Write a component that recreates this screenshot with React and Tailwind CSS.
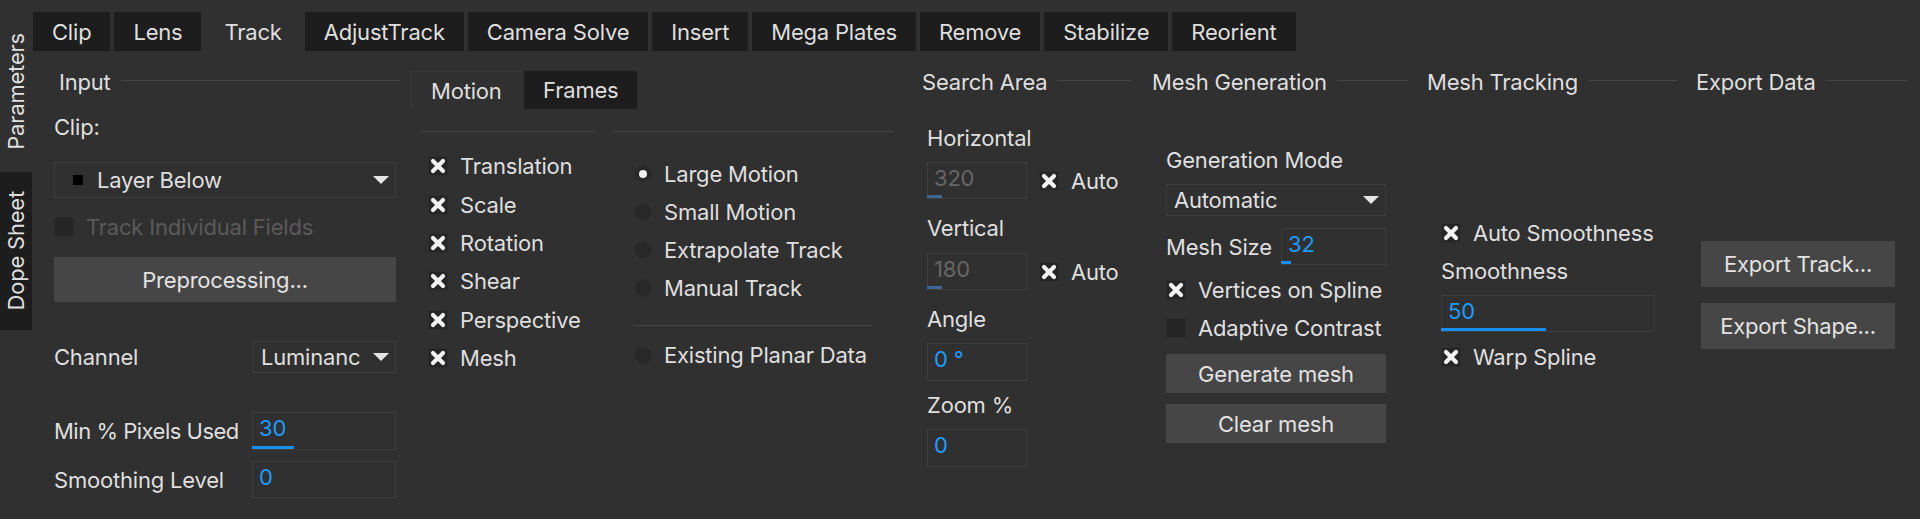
import React from "react";

const tabs = ["Clip", "Lens", "Track", "AdjustTrack", "Camera Solve", "Insert", "Mega Plates", "Remove", "Stabilize", "Reorient"];
const motions = ["Translation", "Scale", "Rotation", "Shear", "Perspective", "Mesh"];
const modes = ["Large Motion", "Small Motion", "Extrapolate Track", "Manual Track"];

function XMark() {
  return (
    <svg viewBox="0 0 18 18" className="w-[18px] h-[18px]">
      <path d="M4 4 L14 14 M14 4 L4 14" stroke="#f2f2f2" strokeWidth="4.2" strokeLinecap="round" />
    </svg>
  );
}

function Arrow() {
  return (
    <svg viewBox="0 0 16 8" className="w-[16px] h-[8px] shrink-0">
      <polygon points="0,0 16,0 8,8" fill="#e4e4e4" />
    </svg>
  );
}

function Heading({ title, pad = "" }) {
  return (
    <div className="flex items-center h-[30px] gap-[10px]">
      <span className={`whitespace-nowrap ${pad}`}>{title}</span>
      <div className="flex-1 h-px bg-[#464646] mb-[3px]" />
    </div>
  );
}

function Check({ label, checked, disabled, className = "" }) {
  return (
    <div className={`flex items-center gap-3 ${className}`}>
      <div className="w-[20px] h-[20px] shrink-0 bg-[#262626] border border-[#2c2c2c] flex items-center justify-center">
        {checked && <XMark />}
      </div>
      <span className={disabled ? "text-[#5a5a5a] whitespace-nowrap" : "whitespace-nowrap"}>{label}</span>
    </div>
  );
}

function Radio({ label, on }) {
  return (
    <div className="flex items-center gap-3 h-[38px] pl-[22px]">
      <div className="w-[18px] h-[18px] rounded-full bg-[#282828] border border-[#2e2e2e] flex items-center justify-center">
        {on && <div className="w-[8px] h-[8px] rounded-full bg-[#f0f0f0]" />}
      </div>
      <span>{label}</span>
    </div>
  );
}

function Field({ value, dim, bar, className = "" }) {
  return (
    <div className={`relative border border-[#3e3e3e] pl-[6px] pt-[2px] leading-[26px] ${className}`}>
      <span className={dim ? "text-[#666666]" : "text-[#1c9cff]"}>{value}</span>
      {bar && <div className={`absolute -left-px bottom-0 h-[3px] ${bar}`} />}
    </div>
  );
}

function Button({ children, className = "" }) {
  return <div className={`bg-[#464646] flex items-center justify-center text-[#e2e2e2] ${className}`}>{children}</div>;
}

export default function App() {
  return (
    <div className="w-[1920px] h-[519px] bg-[#303030] text-[22px] leading-[30px] tracking-[-0.2px] text-[#dfdfdf] flex overflow-hidden font-[Inter,sans-serif]">
      {/* side tabs */}
      <div className="w-[32px] shrink-0 flex flex-col pt-[12px]">
        <div className="h-[158px] flex items-center justify-center">
          <span className="[writing-mode:vertical-rl] rotate-180 leading-none">Parameters</span>
        </div>
        <div className="h-[158px] mt-[2px] bg-[#1d1d1d] flex items-center justify-center">
          <span className="[writing-mode:vertical-rl] rotate-180 leading-none">Dope Sheet</span>
        </div>
      </div>

      <div className="flex-1 flex flex-col pt-[12px]">
        <div className="flex gap-1 h-[39px] ml-px">
          {tabs.map((t) => (
            <div key={t} className={t === "Track" ? "px-[19px] flex items-center bg-[#303030]" : "px-[19px] flex items-center bg-[#1d1d1d]"}>
              {t}
            </div>
          ))}
        </div>

        <div className="flex items-start pl-[22px] pt-[16px]">
          {/* Input */}
          <div className="w-[346px] flex flex-col">
            <Heading title="Input" pad="pl-[5px]" />
            <div className="mt-[15px] h-[30px]">Clip:</div>
            <div className="mt-[20px] w-[342px] h-[36px] border border-[#3e3e3e] flex items-center pl-[18px] pr-[6px]">
              <div className="w-[10px] h-[10px] bg-black" />
              <span className="ml-[14px]">Layer Below</span>
              <div className="ml-auto"><Arrow /></div>
            </div>
            <Check className="mt-[19px] h-[20px]" label="Track Individual Fields" disabled />
            <Button className="mt-[20px] w-[342px] h-[45px]">Preprocessing...</Button>
            <div className="mt-[39px] w-[342px] h-[32px] flex items-center justify-between">
              <span>Channel</span>
              <div className="w-[143px] h-full border border-[#3e3e3e] flex items-center pl-[7px] pr-[6px]">
                <div className="w-[100px] overflow-hidden whitespace-nowrap">Luminance</div>
                <div className="ml-auto"><Arrow /></div>
              </div>
            </div>
            <div className="mt-[39px] w-[342px] h-[38px] flex items-center justify-between">
              <span className="tracking-[-0.5px]">Min % Pixels Used</span>
              <Field className="w-[144px] h-full" value="30" bar="w-[42px] bg-[#1490f5]" />
            </div>
            <div className="mt-[11px] w-[342px] h-[37px] flex items-center justify-between">
              <span>Smoothing Level</span>
              <Field className="w-[144px] h-full" value="0" />
            </div>
          </div>

          {/* Motion / Frames */}
          <div className="ml-[11px] w-[482px] flex flex-col">
            <div className="mt-[4px] flex h-[38px] gap-[2px]">
              <div className="w-[111px] pl-[19px] flex items-center border-l border-t border-[#3a3a3a]">Motion</div>
              <div className="w-[113px] pl-[19px] flex items-center bg-[#1d1d1d]">Frames</div>
            </div>
            <div className="flex mt-[22px]">
              <div className="ml-[9px] w-[176px] border-t border-[#464646] pt-[15px]">
                {motions.map((m) => (
                  <Check key={m} className="h-[38.4px] pl-[8px]" label={m} checked />
                ))}
              </div>
              <div className="ml-[16px] w-[281px] border-t border-[#464646] pt-[23px]">
                {modes.map((m, i) => (
                  <Radio key={m} label={m} on={i === 0} />
                ))}
                <div className="mt-[18px] ml-[21px] w-[239px] h-px bg-[#464646]" />
                <div className="mt-[10px]">
                  <Radio label="Existing Planar Data" />
                </div>
              </div>
            </div>
          </div>

          {/* Search Area */}
          <div className="ml-[29px] w-[210px] flex flex-col">
            <Heading title="Search Area" />
            <div className="mt-[26px] h-[30px] pl-[5px]">Horizontal</div>
            <div className="mt-[9px] h-[37px] pl-[5px] flex items-center">
              <Field className="w-[100px] h-full" value="320" dim bar="w-[15px] bg-[#3a6890]" />
              <Check className="ml-[12px]" label="Auto" checked />
            </div>
            <div className="mt-[14px] h-[30px] pl-[5px]">Vertical</div>
            <div className="mt-[10px] h-[37px] pl-[5px] flex items-center">
              <Field className="w-[100px] h-full" value="180" dim bar="w-[15px] bg-[#3a6890]" />
              <Check className="ml-[12px]" label="Auto" checked />
            </div>
            <div className="mt-[14px] h-[30px] pl-[5px]">Angle</div>
            <div className="mt-[9px] h-[38px] pl-[5px]">
              <Field className="w-[100px] h-full" value="0 °" />
            </div>
            <div className="mt-[9px] h-[30px] pl-[5px]">Zoom %</div>
            <div className="mt-[9px] h-[38px] pl-[5px]">
              <Field className="w-[100px] h-full" value="0" />
            </div>
          </div>

          {/* Mesh Generation */}
          <div className="ml-[20px] w-[256px] flex flex-col">
            <Heading title="Mesh Generation" />
            <div className="pl-[14px] w-[234px] flex flex-col">
              <div className="mt-[48px] h-[30px]">Generation Mode</div>
              <div className="mt-[9px] h-[32px] border border-[#3e3e3e] flex items-center pl-[7px] pr-[6px]">
                <span>Automatic</span>
                <div className="ml-auto"><Arrow /></div>
              </div>
              <div className="mt-[12px] h-[37px] flex items-center justify-between">
                <span>Mesh Size</span>
                <Field className="w-[105px] h-full" value="32" bar="w-[10px] bg-[#1490f5]" />
              </div>
              <Check className="mt-[10px] h-[30px]" label="Vertices on Spline" checked />
              <Check className="mt-[8px] h-[30px]" label="Adaptive Contrast" />
              <Button className="mt-[11px] h-[39px]">Generate mesh</Button>
              <Button className="mt-[11px] h-[39px]">Clear mesh</Button>
            </div>
          </div>

          {/* Mesh Tracking */}
          <div className="ml-[19px] w-[250px] flex flex-col">
            <Heading title="Mesh Tracking" />
            <div className="pl-[14px] flex flex-col">
              <Check className="mt-[121px] h-[30px]" label="Auto Smoothness" checked />
              <div className="mt-[8px] h-[30px]">Smoothness</div>
              <Field className="mt-[9px] w-[214px] h-[37px]" value="50" bar="w-[105px] bg-[#1490f5]" />
              <Check className="mt-[10px] h-[30px]" label="Warp Spline" checked />
            </div>
          </div>

          {/* Export Data */}
          <div className="ml-[19px] w-[212px] flex flex-col">
            <Heading title="Export Data" />
            <div className="pl-[5px] flex flex-col">
              <Button className="mt-[144px] w-[194px] h-[46px]">Export Track...</Button>
              <Button className="mt-[16px] w-[194px] h-[46px]">Export Shape...</Button>
            </div>
          </div>
        </div>
      </div>
    </div>
  );
}
